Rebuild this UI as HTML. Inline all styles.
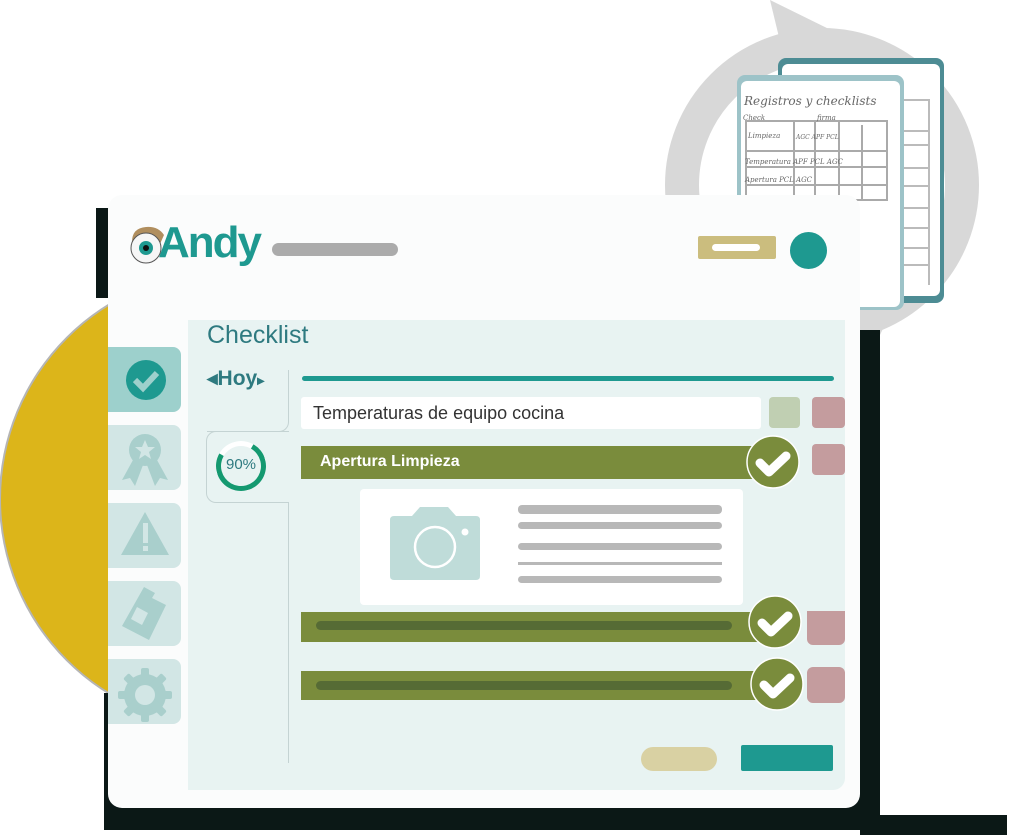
<!DOCTYPE html>
<html><head><meta charset="utf-8"><style>
*{margin:0;padding:0;box-sizing:border-box}
body{width:1011px;height:835px;background:#fff;position:relative;overflow:hidden;font-family:"Liberation Sans",sans-serif}
.a{position:absolute}
</style></head><body>
<svg class="a" style="left:0;top:0" width="1011" height="835">
 <circle cx="822" cy="185" r="140" fill="none" stroke="#d8d8d8" stroke-width="34"/>
 <polygon points="770,0 835,32 785,62" fill="#d8d8d8"/>
 <polygon points="880,335 835,300 905,282" fill="#d8d8d8"/>
 <rect x="778" y="58" width="166" height="245" rx="8" fill="#4d8c94"/>
 <rect x="782" y="64" width="158" height="232" rx="6" fill="#fff"/>
 <g stroke="#bbb" stroke-width="2">
  <line x1="903" y1="100" x2="930" y2="100"/><line x1="903" y1="131" x2="930" y2="131"/><line x1="903" y1="145" x2="930" y2="145"/><line x1="903" y1="168" x2="930" y2="168"/><line x1="903" y1="186" x2="930" y2="186"/><line x1="903" y1="208" x2="930" y2="208"/><line x1="903" y1="228" x2="930" y2="228"/><line x1="903" y1="248" x2="930" y2="248"/><line x1="903" y1="265" x2="930" y2="265"/><line x1="929" y1="100" x2="929" y2="285"/>
 </g>
 <rect x="737" y="75" width="167" height="235" rx="8" fill="#9dc3c8"/>
 <rect x="741" y="81" width="159" height="226" rx="6" fill="#fff"/>
 <g stroke="#aaa" stroke-width="2">
  <line x1="745" y1="121" x2="888" y2="121"/><line x1="745" y1="151" x2="888" y2="151"/><line x1="745" y1="167" x2="888" y2="167"/><line x1="745" y1="185" x2="888" y2="185"/><line x1="745" y1="200" x2="888" y2="200"/>
  <line x1="746" y1="121" x2="746" y2="200"/><line x1="794" y1="121" x2="794" y2="200"/><line x1="815" y1="121" x2="815" y2="200"/><line x1="839" y1="121" x2="839" y2="200"/><line x1="862" y1="125" x2="862" y2="200"/><line x1="887" y1="121" x2="887" y2="200"/>
 </g>
 <g font-family="'DejaVu Serif',serif" font-style="italic" fill="#666">
  <text x="744" y="105" font-size="12">Registros y checklists</text>
  <text x="743" y="120" font-size="7">Check</text><text x="817" y="120" font-size="7">firma</text>
  <text x="748" y="138" font-size="7">Limpieza</text><text x="796" y="139" font-size="6">AGC APF PCL</text>
  <text x="745" y="164" font-size="7">Temperatura APF PCL  AGC</text>
  <text x="745" y="182" font-size="7">Apertura   PCL AGC</text>
 </g>
 <circle cx="228" cy="499" r="229" fill="#b5b5b5"/>
 <circle cx="228" cy="499" r="227" fill="#dcb51a"/>
 <rect x="96" y="208" width="14" height="90" fill="#0b1816"/>
 <rect x="104" y="693" width="10" height="130" fill="#0b1816"/>
 <rect x="104" y="780" width="776" height="50" fill="#0b1816"/>
 <rect x="840" y="330" width="40" height="500" fill="#0b1816"/>
 <rect x="860" y="815" width="147" height="20" fill="#0b1816"/>
</svg>
<div class="a" style="left:108px;top:195px;width:752px;height:613px;background:#fbfcfc;border-radius:14px"></div>
<div class="a" style="left:188px;top:320px;width:657px;height:470px;background:#e8f3f2;border-radius:0 0 12px 0"></div>
<svg class="a" style="left:128px;top:222px" width="40" height="46">
 <path d="M4 20 Q4 6 18 5 Q30 4 36 13 L32 22 L8 24 Z" fill="#b08e5e"/>
 <circle cx="18" cy="26" r="15" fill="#f6f6f6" stroke="#555" stroke-width="1"/>
 <circle cx="18" cy="26" r="7" fill="#1e9990"/><circle cx="18" cy="26" r="3" fill="#111"/>
</svg>
<div class="a" style="left:158px;top:218px;font-size:44px;font-weight:bold;color:#1e9990;letter-spacing:-2px">Andy</div>
<div class="a" style="left:272px;top:243px;width:126px;height:13px;background:#ababab;border-radius:7px"></div>
<div class="a" style="left:698px;top:236px;width:78px;height:23px;background:#cbbd7e;border-radius:2px"></div>
<div class="a" style="left:712px;top:244px;width:48px;height:7px;background:#fff;border-radius:4px"></div>
<div class="a" style="left:790px;top:232px;width:37px;height:37px;background:#1e9990;border-radius:50%"></div>
<div class="a" style="left:108px;top:347px;width:73px;height:65px;background:#9dd0cc;border-radius:0 8px 8px 0"></div>
<div class="a" style="left:108px;top:425px;width:73px;height:65px;background:#d2e6e5;border-radius:0 8px 8px 0"></div>
<div class="a" style="left:108px;top:503px;width:73px;height:65px;background:#d2e6e5;border-radius:0 8px 8px 0"></div>
<div class="a" style="left:108px;top:581px;width:73px;height:65px;background:#d2e6e5;border-radius:0 8px 8px 0"></div>
<div class="a" style="left:108px;top:659px;width:73px;height:65px;background:#d2e6e5;border-radius:0 8px 8px 0"></div>
<svg class="a" style="left:108px;top:347px" width="73" height="380">
 <circle cx="38" cy="33" r="20" fill="#1e9990"/><path d="M27 33 L35 41 L49 26" fill="none" stroke="#9dd0cc" stroke-width="6"/>
 <g fill="#a9cfcc">
  <circle cx="37" cy="103" r="16"/><path d="M25 113 L14 133 L22 131 L27 139 L35 118Z M49 113 L60 133 L52 131 L47 139 L39 118Z"/>
  <path d="M13 208 L37 165 L61 208Z"/>
  <path d="M36 240 L47 246 L44 251 L58 258 L41 293 L14 279Z"/>
  <circle cx="37" cy="348" r="21"/>
  <g transform="translate(37 348)"><rect x="-4" y="-27" width="8" height="54" rx="2"/><rect x="-4" y="-27" width="8" height="54" rx="2" transform="rotate(45)"/><rect x="-4" y="-27" width="8" height="54" rx="2" transform="rotate(90)"/><rect x="-4" y="-27" width="8" height="54" rx="2" transform="rotate(135)"/></g>
 </g>
 <path d="M37 93 L40 100 L47 100 L41 105 L43 112 L37 108 L31 112 L33 105 L27 100 L34 100Z" fill="#d2e6e5"/>
 <rect x="35" y="176" width="5" height="20" fill="#d2e6e5"/><rect x="35" y="199" width="5" height="5" fill="#d2e6e5"/>
 <path d="M29 260 L40 266 L34 278 L23 272Z" fill="#d2e6e5"/>
 <circle cx="37" cy="348" r="10" fill="#d2e6e5"/>
</svg>
<div class="a" style="left:207px;top:321px;font-size:25px;color:#2e7a80">Checklist</div>
<div class="a" style="left:207px;top:366px;font-size:21px;font-weight:bold;color:#2e7a80">◂Hoy<span style="font-size:14px">▸</span></div>
<div class="a" style="left:207px;top:370px;width:82px;height:62px;border-right:1px solid #c4d3d3;border-bottom:1px solid #c4d3d3;border-bottom-right-radius:10px"></div>
<div class="a" style="left:206px;top:431px;width:83px;height:72px;border:1px solid #c4d3d3;border-right:none;border-radius:10px 0 0 10px"></div>
<div class="a" style="left:288px;top:503px;width:1px;height:260px;background:#c4d3d3"></div>
<div class="a" style="left:216px;top:441px;width:50px;height:50px;border:5px solid #149970;border-radius:50%;border-top-color:#fff;transform:rotate(-15deg)"></div>
<div class="a" style="left:216px;top:456px;width:50px;text-align:center;font-size:15px;color:#2e7a80">90%</div>
<div class="a" style="left:302px;top:376px;width:532px;height:5px;background:#1e9990;border-radius:3px"></div>
<div class="a" style="left:301px;top:397px;width:460px;height:32px;background:#fff;border-radius:3px"></div>
<div class="a" style="left:313px;top:403px;font-size:18px;color:#333">Temperaturas de equipo cocina</div>
<div class="a" style="left:769px;top:397px;width:31px;height:31px;background:#c0cfb2;border-radius:4px"></div>
<div class="a" style="left:812px;top:397px;width:33px;height:31px;background:#c49c9e;border-radius:4px"></div>
<div class="a" style="left:301px;top:446px;width:464px;height:33px;background:#7a8c3c"></div>
<div class="a" style="left:320px;top:453px;font-size:16px;font-weight:bold;color:#fff">Apertura Limpieza</div>
<div class="a" style="left:812px;top:444px;width:33px;height:31px;background:#c49c9e;border-radius:4px"></div>
<div class="a" style="left:360px;top:489px;width:383px;height:116px;background:#fff;border-radius:4px"></div>
<svg class="a" style="left:390px;top:505px" width="92" height="76"><path d="M30 2 H58 L66 11 H86 Q90 11 90 15 V71 Q90 75 86 75 H4 Q0 75 0 71 V15 Q0 11 4 11 H22Z" fill="#bfdcd9"/><circle cx="45" cy="42" r="20" fill="none" stroke="#fff" stroke-width="2.5"/><circle cx="75" cy="27" r="3.5" fill="#fff"/></svg>
<div class="a" style="left:518px;top:505px;width:204px;height:9px;background:#b8b8b8;border-radius:4px"></div>
<div class="a" style="left:518px;top:522px;width:204px;height:7px;background:#b8b8b8;border-radius:4px"></div>
<div class="a" style="left:518px;top:543px;width:204px;height:7px;background:#b8b8b8;border-radius:4px"></div>
<div class="a" style="left:518px;top:562px;width:204px;height:3px;background:#b8b8b8"></div>
<div class="a" style="left:518px;top:576px;width:204px;height:7px;background:#b8b8b8;border-radius:4px"></div>
<div class="a" style="left:301px;top:612px;width:464px;height:30px;background:#7a8c3c"></div>
<div class="a" style="left:316px;top:621px;width:416px;height:9px;background:#566b35;border-radius:5px"></div>
<div class="a" style="left:807px;top:611px;width:38px;height:34px;background:#c49c9e;border-radius:0 0 6px 6px"></div>
<div class="a" style="left:301px;top:671px;width:464px;height:29px;background:#7a8c3c"></div>
<div class="a" style="left:316px;top:681px;width:416px;height:9px;background:#566b35;border-radius:5px"></div>
<div class="a" style="left:807px;top:667px;width:38px;height:36px;background:#c49c9e;border-radius:6px"></div>
<svg class="a" style="left:740px;top:430px" width="80" height="290">
 <g stroke="#fff" stroke-width="1.5" fill="#7a8c3c">
  <circle cx="33" cy="32" r="26"/><circle cx="35" cy="192" r="26"/><circle cx="37" cy="254" r="26"/>
 </g>
 <g stroke="#fff" stroke-width="9" fill="none" stroke-linecap="round" stroke-linejoin="round">
  <path d="M20 33 L29 42 L46 26"/><path d="M22 193 L31 202 L48 186"/><path d="M24 255 L33 264 L50 248"/>
 </g>
</svg>
<div class="a" style="left:641px;top:747px;width:76px;height:24px;background:#d9d1a3;border-radius:12px"></div>
<div class="a" style="left:741px;top:745px;width:92px;height:26px;background:#1e9990;border-radius:2px"></div>
</body></html>
